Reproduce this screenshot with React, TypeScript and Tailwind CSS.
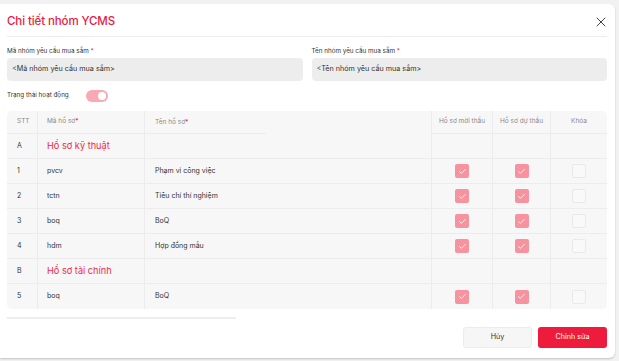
import { X, Check } from "lucide-react";

type Row = {
  stt: string;
  code: string;
  name: string;
  group?: boolean;
  moi?: boolean;
  du?: boolean;
};

const rows: Row[] = [
  { stt: "A", code: "Hồ sơ kỹ thuật", name: "", group: true },
  { stt: "1", code: "pvcv", name: "Phạm vi công việc", moi: true, du: true },
  { stt: "2", code: "tctn", name: "Tiêu chí thí nghiệm", moi: true, du: true },
  { stt: "3", code: "boq", name: "BoQ", moi: true, du: true },
  { stt: "4", code: "hdm", name: "Hợp đồng mẫu", moi: true, du: true },
  { stt: "B", code: "Hồ sơ tài chính", name: "", group: true },
  { stt: "5", code: "boq", name: "BoQ", moi: true, du: true },
];

const cols = "grid grid-cols-[31px_107px_287px_61px_58px_56px]";

function Box({ checked }: { checked?: boolean }) {
  if (checked) {
    return (
      <div className="w-[14px] h-[14px] rounded-[2px] bg-[#f7939f] flex items-center justify-center">
        <Check size={9} strokeWidth={2.2} className="text-white" />
      </div>
    );
  }
  return <div className="w-[14px] h-[14px] rounded-[2px] border border-[#e9e9e9] bg-[#f9f9f9]" />;
}

export default function App() {
  return (
    <div
      className="w-[619px] h-[361px] bg-[#f2f2f2] pt-[4px] pr-[4px] pb-[3px] overflow-hidden"
      style={{ fontFamily: "Inter, 'Noto Sans', sans-serif" }}
    >
      <div className="w-[615px] h-[354px] bg-white rounded-r-[6px] shadow-[0_1px_2px_rgba(0,0,0,0.2)] pl-[7px] pr-[8px] flex flex-col">
        {/* header */}
        <div className="h-[33px] flex items-center justify-between border-b border-[#ededed] pt-[4px]">
          <h1 className="text-[11.5px] font-medium text-[#e8203f] tracking-[-0.1px]">Chi tiết nhóm YCMS</h1>
          <X size={16} strokeWidth={1.4} className="text-[#333] -mr-[2px]" />
        </div>

        {/* inputs */}
        <div className="grid grid-cols-2 gap-[9px] mt-[10px]">
          <div>
            <div className="text-[6.3px] text-[#333] leading-[9px] mb-[2px]">
              Mã nhóm yêu cầu mua sắm <span className="text-[#e8203f]">*</span>
            </div>
            <div className="h-[23px] rounded-[4px] bg-[#ededed] flex items-center px-[5px] text-[7.2px] text-[#333]">
              {"<Mã nhóm yêu cầu mua sắm>"}
            </div>
          </div>
          <div>
            <div className="text-[6.3px] text-[#333] leading-[9px] mb-[2px]">
              Tên nhóm yêu cầu mua sắm <span className="text-[#e8203f]">*</span>
            </div>
            <div className="h-[23px] rounded-[4px] bg-[#ededed] flex items-center px-[5px] text-[7.2px] text-[#333]">
              {"<Tên nhóm yêu cầu mua sắm>"}
            </div>
          </div>
        </div>

        {/* status */}
        <div className="flex items-center mt-[9px] h-[12px]">
          <span className="text-[6.3px] text-[#333] w-[79px]">Trạng thái hoạt động</span>
          <div className="w-[22px] h-[12px] rounded-full bg-[#f8a9b5] flex items-center justify-end pr-[2px]">
            <div className="w-[8px] h-[8px] rounded-full bg-white" />
          </div>
        </div>

        {/* table */}
        <div className="mt-[9px] rounded-[5px] bg-[#f7f7f7] overflow-hidden">
          <div className={`${cols} h-[23px] text-[6.5px] text-[#8a8a8a]`}>
            <div className="border-r border-b border-[#ececec] flex items-center pl-[10px]">STT</div>
            <div className="border-r border-b border-[#ececec] flex items-center pl-[9px]">
              Mã hồ sơ<span className="text-[#e8203f]">*</span>
            </div>
            <div className="border-r border-[#ececec] relative flex items-center pl-[10px]">
              Tên hồ sơ<span className="text-[#e8203f]">*</span>
              <div className="absolute left-0 bottom-0 w-[121px] h-px bg-[#ececec]" />
            </div>
            <div className="border-r border-b border-[#ececec] flex items-center justify-center">Hồ sơ mời thầu</div>
            <div className="border-r border-b border-[#ececec] flex items-center justify-center">Hồ sơ dự thầu</div>
            <div className="border-b border-[#ececec] flex items-center justify-center">Khóa</div>
          </div>
          {rows.map((r, i) => (
            <div
              key={i}
              className={`${cols} h-[25px] text-[7px] text-[#333] ${i < rows.length - 1 ? "border-b border-[#ececec]" : ""}`}
            >
              <div className="border-r border-[#ececec] flex items-center pl-[10px]">{r.stt}</div>
              <div
                className={`border-r border-[#ececec] flex items-center pl-[9px] ${
                  r.group ? "text-[9.2px] text-[#ee2a48] whitespace-nowrap" : ""
                }`}
              >
                {r.code}
              </div>
              <div className="border-r border-[#ececec] flex items-center pl-[10px]">{r.name}</div>
              <div className="border-r border-[#ececec] flex items-center justify-center">
                {!r.group && <Box checked={r.moi} />}
              </div>
              <div className="border-r border-[#ececec] flex items-center justify-center">
                {!r.group && <Box checked={r.du} />}
              </div>
              <div className="flex items-center justify-center">{!r.group && <Box />}</div>
            </div>
          ))}
        </div>

        {/* scroll track */}
        <div className="w-[229px] h-[1.5px] bg-[#eeeeee] mt-[8px]" />

        {/* footer */}
        <div className="flex justify-end gap-[6px] mt-[8px]">
          <button className="w-[69px] h-[21px] rounded-[3px] bg-[#f6f6f6] border border-[#ececec] text-[7.2px] text-[#333]">
            Hủy
          </button>
          <button className="w-[69px] h-[21px] rounded-[3px] bg-[#ef1b3c] text-[7.2px] text-white">Chỉnh sửa</button>
        </div>
      </div>
    </div>
  );
}
